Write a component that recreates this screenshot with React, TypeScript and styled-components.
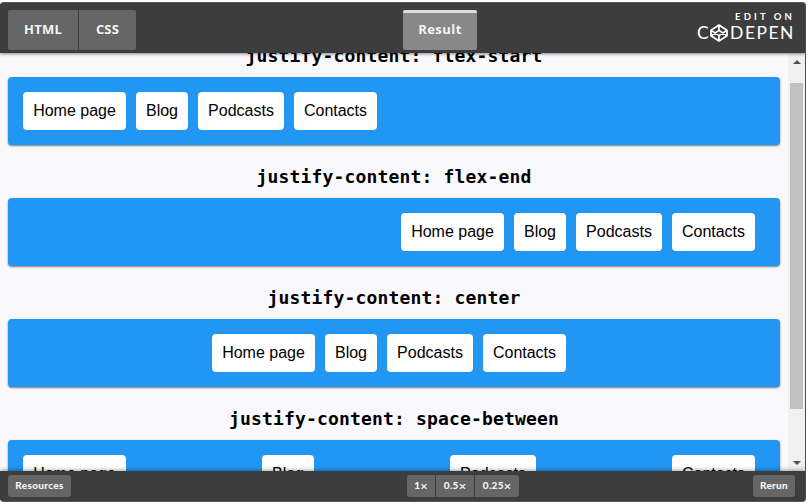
import React from "react";
import styled, { createGlobalStyle } from "styled-components";

const GlobalStyle = createGlobalStyle`
  * { box-sizing: border-box; }
  body {
    margin: 0;
    background: #fff;
    overflow: hidden;
    font-family: "Liberation Sans", Arial, sans-serif;
  }
`;

const Embed = styled.div`
  display: flex;
  flex-direction: column;
  width: 806px;
  height: 500px;
  margin-top: 2px;
  border-radius: 4px;
  border-top: 1px solid #555;
  border-right: 1px solid #4e4e50;
  border-bottom: 1px solid #575757;
  background: #3d3d3e;
  overflow: hidden;
`;

const Header = styled.header`
  display: grid;
  grid-template-columns: 395px 74px 1fr;
  align-items: start;
  flex: none;
  height: 50px;
  padding: 7px 11px 0 8px;
  background: #3d3d3e;
  box-shadow: 0 1px 3px rgba(0, 0, 0, 0.45);
  z-index: 1;
`;

const Tabs = styled.div`
  display: flex;
  gap: 1px;
`;

const Tab = styled.button<{ $width: number; $active?: boolean; $corners?: string }>`
  width: ${(p) => p.$width}px;
  height: 40px;
  padding: 0 0 ${(p) => (p.$active ? "6px" : "2px")};
  border: 0;
  border-top: ${(p) => (p.$active ? "3px solid #dedede" : "0")};
  border-radius: ${(p) => p.$corners || "2px"};
  background: ${(p) => (p.$active ? "#888" : "#666")};
  color: #f4f4f4;
  font: 700 13px/${(p) => (p.$active ? "30px" : "38px")} "Open Sans", sans-serif;
  letter-spacing: ${(p) => (p.$active ? "0.45px" : "0.2px")};
`;

const Brand = styled.div`
  display: flex;
  flex-direction: column;
  align-items: flex-end;
  color: #fff;
  font-family: Lato, sans-serif;
`;

const EditOn = styled.span`
  margin: 1px -1px 0 0;
  font-size: 9.5px;
  line-height: 12px;
  font-weight: 700;
  letter-spacing: 3.1px;
`;

const Logo = styled.div`
  display: flex;
  align-items: center;
  height: 20px;
  margin: 0 -1px 0 0;
  font-size: 17.5px;
  line-height: 20px;
  letter-spacing: 1.5px;
  svg { display: block; margin: 0 2px 0 0; }
`;

const Result = styled.main`
  display: flex;
  flex: 1;
  min-height: 0;
  background: #f9f8fd;
`;

const Page = styled.div`
  flex: 1;
  overflow: hidden;
  padding: 0 8px;
`;

const Scrolled = styled.div`
  margin-top: -29px;
`;

const Heading = styled.h2`
  height: 53px;
  margin: 0;
  padding-top: 5px;
  color: #000;
  text-align: center;
  font: 700 18px/53px "DejaVu Sans Mono", monospace;
  letter-spacing: 0.163px;
`;

const Menu = styled.nav<{ $justify: string }>`
  display: flex;
  justify-content: ${(p) => p.$justify};
  gap: 10px;
  height: 68px;
  padding: 15px 25px 15px 15px;
  border-radius: 4px;
  background: #2196f3;
  box-shadow: 0 1px 2px rgba(0, 0, 0, 0.5);
`;

const MenuItem = styled.a<{ $width: number }>`
  width: ${(p) => p.$width}px;
  height: 38px;
  border-radius: 4px;
  background: #fff;
  color: #000;
  text-align: center;
  font-size: 16px;
  line-height: 38px;
  white-space: nowrap;
`;

const Scrollbar = styled.div`
  display: flex;
  flex-direction: column;
  align-items: center;
  width: 17px;
  padding: 7px 0 6px;
  background: #f0f0f0;
  svg { display: block; flex: none; }
`;

const Thumb = styled.div`
  width: 13px;
  height: 326px;
  margin-top: 19px;
  margin-bottom: auto;
  background: #c1c1c1;
`;

const Footer = styled.footer`
  display: grid;
  grid-template-columns: 399px auto 1fr;
  align-items: start;
  flex: none;
  height: 30px;
  padding: 4px 10px 0 8px;
  background: #3d3d3e;
  box-shadow: 0 -1px 4px rgba(0, 0, 0, 0.35);
  z-index: 1;
`;

const Zooms = styled.div`
  display: flex;
  gap: 1px;
`;

const Small = styled.button<{ $width: number; $corners?: string; $end?: boolean }>`
  display: flex;
  align-items: center;
  justify-content: center;
  width: ${(p) => p.$width}px;
  height: 22px;
  padding: 0 0 1px;
  border: 0;
  border-radius: ${(p) => p.$corners || "3px"};
  justify-self: ${(p) => (p.$end ? "end" : "start")};
  background: #666;
  color: #f4f4f4;
  font: 900 10px/21px Lato, sans-serif;
  letter-spacing: 0.3px;
`;

const Times = styled.span`
  padding-top: 1px;
  font: 600 13px/20px "Open Sans", sans-serif;
  letter-spacing: 0;
`;

const links = [
  { label: "Home page", width: 103 },
  { label: "Blog", width: 52 },
  { label: "Podcasts", width: 86 },
  { label: "Contacts", width: 83 },
];

const demos = ["flex-start", "flex-end", "center", "space-between"];

export default function App() {
  return (
    <>
      <GlobalStyle />
      <Embed>
        <Header>
          <Tabs>
            <Tab $width={70} $corners="2px 0 0 2px">HTML</Tab>
            <Tab $width={57} $corners="0 2px 2px 0">CSS</Tab>
          </Tabs>
          <Tab $width={74} $active>Result</Tab>
          <Brand>
            <EditOn>EDIT ON</EditOn>
            <Logo>
              <span>C</span>
              <svg width="18" height="18" viewBox="0 0 18 18" fill="none" stroke="#fff" strokeWidth="1.7" strokeLinejoin="round">
                <path d="M9 1L17 6.2V11.8L9 17L1 11.8V6.2ZM9 1V6.4M9 11.6V17M1 6.2L9 11.6L17 6.2M1 11.8L9 6.4L17 11.8" />
              </svg>
              <span>DEPEN</span>
            </Logo>
          </Brand>
        </Header>
        <Result>
          <Page>
            <Scrolled>
              {demos.map((value) => (
                <section key={value}>
                  <Heading>justify-content: {value}</Heading>
                  <Menu $justify={value}>
                    {links.map((link) => (
                      <MenuItem key={link.label} $width={link.width}>{link.label}</MenuItem>
                    ))}
                  </Menu>
                </section>
              ))}
            </Scrolled>
          </Page>
          <Scrollbar>
            <svg width="8" height="4" viewBox="0 0 8 4"><path d="M0 4L4 0L8 4Z" fill="#505050" /></svg>
            <Thumb />
            <svg width="8" height="4" viewBox="0 0 8 4"><path d="M0 0L4 4L8 0Z" fill="#505050" /></svg>
          </Scrollbar>
        </Result>
        <Footer>
          <Small $width={63}>Resources</Small>
          <Zooms>
            <Small $width={28} $corners="3px 0 0 3px">1<Times>×</Times></Small>
            <Small $width={38} $corners="0">0.5<Times>×</Times></Small>
            <Small $width={44} $corners="0 3px 3px 0">0.25<Times>×</Times></Small>
          </Zooms>
          <Small $width={42} $end>Rerun</Small>
        </Footer>
      </Embed>
    </>
  );
}
